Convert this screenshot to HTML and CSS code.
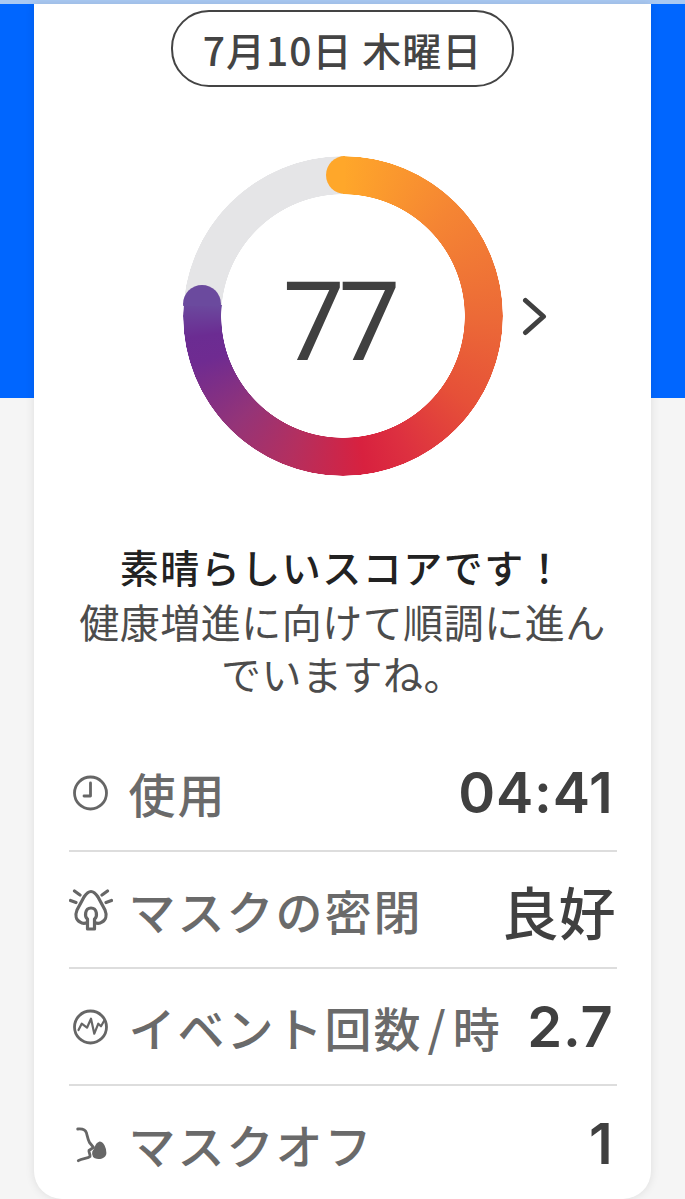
FILE: index.html
```html
<!DOCTYPE html>
<html lang="ja">
<head>
    <meta charset="UTF-8">
    <meta name="viewport" content="width=device-width, initial-scale=1.0">
    <title>スコア</title>
    <link rel="stylesheet" href="styles.css">
</head>
<body>

    <div class="top-strip"></div>

    <main class="card">
        <div class="date-pill">7月10日 木曜日</div>

        <div class="ring">
            <div class="ring-band"></div>
            <span class="cap cap-start"></span>
            <span class="cap cap-end"></span>
            <div class="score">77</div>
            <svg class="chevron" width="26" height="40" viewBox="0 0 26 40">
                <path d="M4.5 3.5 L22.5 19.5 L4.5 35.5" fill="none" stroke="#404040" stroke-width="5" stroke-linecap="round" stroke-linejoin="round"/>
            </svg>
        </div>

        <div class="message">
            <h3>素晴らしいスコアです！</h3>
            <p>健康増進に向けて順調に進んでいますね。</p>
        </div>

        <div class="rows">
            <div class="row">
                <svg class="row-icon" viewBox="0 0 44 44">
                    <circle cx="21.5" cy="22" r="16" />
                    <path d="M21.5 12 V25 H15" />
                </svg>
                <span class="row-label">使用</span>
                <span class="row-value">04:41</span>
            </div>
            <div class="row">
                <svg class="row-icon heavy" viewBox="0 0 44 44">
                    <path d="M22 3.5 C19 3.5 17 6 15 9 L8 22 C6 27 7 32 11 34 C13 35.5 16 35.5 18.5 34.5 M22 3.5 C25 3.5 27 6 29 9 L36 22 C38 27 37 32 33 34 C31 35.5 28 35.5 25.5 34.5" />
                    <path d="M18.5 41 V31 C15.5 29 15.5 20 22 20 C28.5 20 28.5 29 25.5 31 V41 Z" />
                    <path d="M5.5 3 L11 7 M1.5 12.5 L7 14.5 M38.5 3 L33 7 M42.5 12.5 L37 14.5" />
                </svg>
                <span class="row-label">マスクの密閉</span>
                <span class="row-value row-value-word">良好</span>
            </div>
            <div class="row">
                <svg class="row-icon" viewBox="0 0 44 44">
                    <circle cx="21.5" cy="22" r="16" />
                    <path class="thin" d="M9.5 25 L12.7 18.7 L18 22.7 L22 13.7 L25.3 28.7 L29.3 18.7 L32 21.3 L35 16" />
                </svg>
                <span class="row-label">イベント回数&#8202;/&#8202;時</span>
                <span class="row-value">2.7</span>
            </div>
            <div class="row">
                <svg class="row-icon" viewBox="0 0 44 44">
                    <path d="M8.7 7 C13 6.5 16.5 8 17.5 11 C18.5 15 19 18 20.5 20.5 L24.5 25.3 L20 28.5 C19.5 30 21.5 32 21 34.5 C19 36.5 13 36 9.3 38.7" />
                    <path class="solid" d="M30.5 21 C33.5 21 36 26 36 31 C36 35 30 36.5 26.5 35 C24 33.5 24 30 25.5 28.5 C27 27 27 22 30.5 21 Z" />
                </svg>
                <span class="row-label">マスクオフ</span>
                <span class="row-value">1</span>
            </div>
        </div>
    </main>

</body>
</html>
```

FILE: styles.css
```css
html,
body {
    height: 1199px;
}

body {
    margin: 0;
    overflow: hidden;
    font-family: "Noto Sans CJK JP", "Noto Sans", sans-serif;
    background: linear-gradient(#0066ff 398px, #f5f5f5 398px);
}

.top-strip {
    height: 4px;
    background-color: #a9c9f3;
}

.card {
    box-sizing: border-box;
    width: 617px;
    height: 1195px;
    margin: 0 auto;
    padding-top: 6px;
    display: flex;
    flex-direction: column;
    align-items: center;
    background-color: #fff;
    border-radius: 0 0 28px 28px;
    box-shadow: 0 0 10px rgba(0, 0, 0, 0.1);
}

.date-pill {
    flex: none;
    box-sizing: border-box;
    width: 343px;
    height: 77px;
    display: flex;
    align-items: center;
    justify-content: center;
    border: 2px solid #444;
    border-radius: 38px;
    font-size: 39px;
    font-weight: 500;
    letter-spacing: 1px;
    color: #444;
}

.ring {
    flex: none;
    position: relative;
    width: 320px;
    height: 320px;
    margin-top: 69px;
    display: flex;
    align-items: center;
    justify-content: center;
}

.ring-band {
    position: absolute;
    inset: 0;
    border-radius: 50%;
    background: conic-gradient(
        #ffa72a 0deg,
        #f58533 45deg,
        #ec6a37 90deg,
        #e65038 125deg,
        #dd3040 155deg,
        #d8213f 172deg,
        #b42f5f 200deg,
        #943478 225deg,
        #6f2b91 252deg,
        #6b2c92 262deg,
        #6b4a9e 275deg,
        #e5e5e7 275deg,
        #e5e5e7 360deg
    );
    -webkit-mask: radial-gradient(circle, transparent 121.5px, #000 122px, #000 159.5px, transparent 160px);
    mask: radial-gradient(circle, transparent 121.5px, #000 122px, #000 159.5px, transparent 160px);
}

/* only the half past the end of the band is painted, the rest is band */
.cap {
    position: absolute;
    width: 38px;
    height: 38px;
    border-radius: 50%;
}

.cap-start {
    left: 143px;
    top: 0;
    background: linear-gradient(to right, #ffa72a 50%, transparent 50%);
}

.cap-end {
    left: 0;
    top: 129px;
    background: linear-gradient(#6b4a9e 56%, transparent 56%);
}

.score {
    padding: 13px 8px 0 0;
    font-family: Roboto, sans-serif;
    font-size: 110px;
    line-height: 1;
    letter-spacing: -6px;
    color: #404040;
}

.chevron {
    position: absolute;
    left: 338px;
    top: 141px;
}

.message {
    width: 560px;
    margin-top: 61px;
    text-align: center;
    color: #4c4c4c;
}

.message h3 {
    margin: 0;
    font-size: 39px;
    font-weight: 500;
    line-height: 58px;
    letter-spacing: 1.5px;
    color: #222;
}

.message p {
    margin: 0;
    font-size: 40px;
    font-weight: 400;
    line-height: 52px;
    letter-spacing: 0.5px;
    padding: 0 16px;
}

.rows {
    width: 548px;
    margin-top: 36px;
}

.row {
    height: 115px;
    display: flex;
    align-items: center;
    border-bottom: 2px solid #ddd;
}

.row:last-child {
    border-bottom: none;
}

.row-icon {
    flex: none;
    width: 44px;
    height: 44px;
    margin-right: 16px;
    fill: none;
    stroke: #666;
    stroke-width: 2.8;
    stroke-linecap: round;
    stroke-linejoin: round;
}

.row-icon.heavy {
    stroke-width: 3.2;
}

.row-icon .thin {
    stroke-width: 2.2;
}

.row-icon .solid {
    fill: #666;
}

.row-label {
    font-size: 47px;
    font-weight: 500;
    letter-spacing: 2px;
    color: #6a6a6a;
    white-space: nowrap;
}

.row-value {
    margin-left: auto;
    padding-right: 3px;
    font-family: Inter, "Noto Sans CJK JP", sans-serif;
    font-size: 56px;
    font-weight: 600;
    letter-spacing: 0.8px;
    color: #404040;
    white-space: nowrap;
}

.row-value-word {
    padding-right: 1px;
    font-size: 57px;
    font-weight: 500;
    letter-spacing: 0;
}
```
